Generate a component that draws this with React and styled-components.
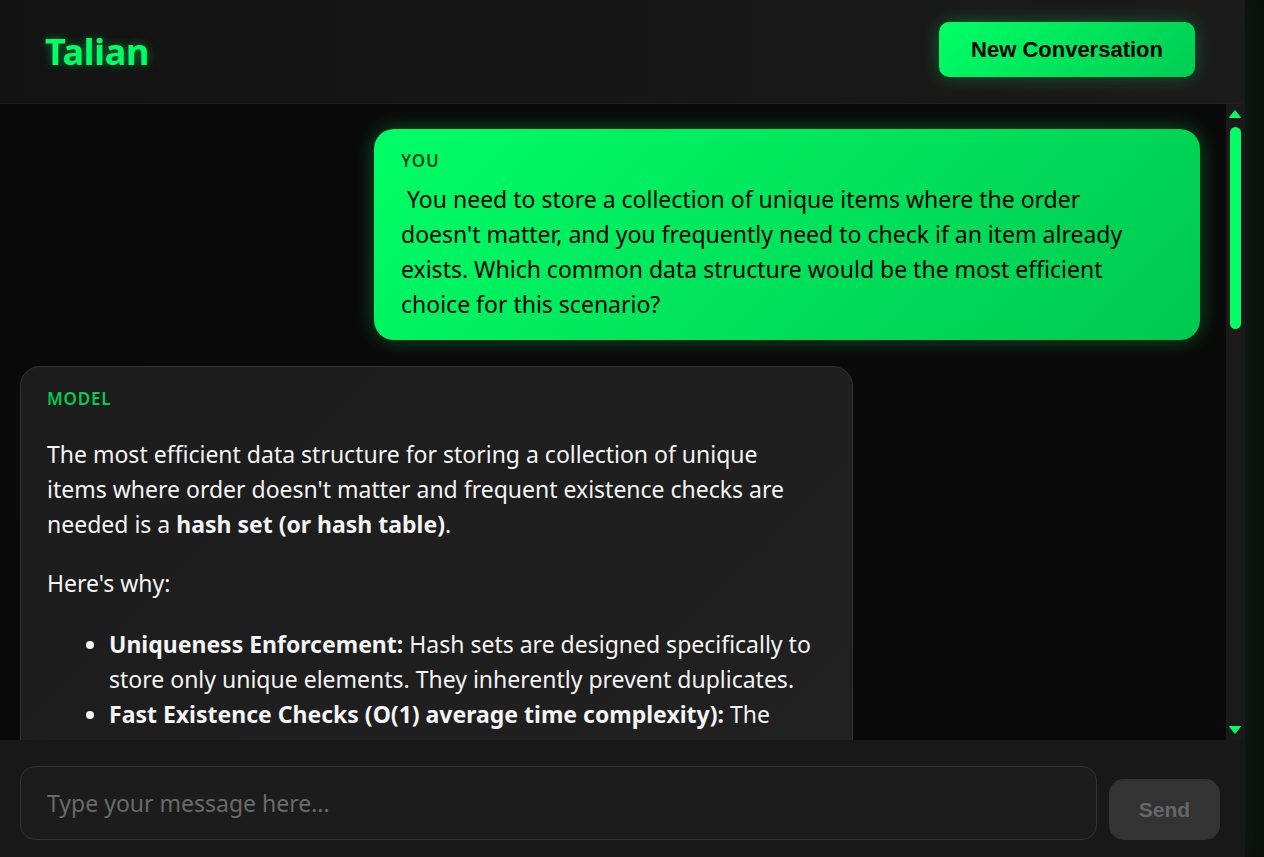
import React from "react";
import styled, { createGlobalStyle } from "styled-components";

const GREEN = "#00ff66";

const Global = createGlobalStyle`
  * { box-sizing: border-box; }
  html, body { margin: 0; padding: 0; height: 100%; overflow: hidden; }
  body {
    background: #0c0f0d;
    font-family: "Noto Sans", "Open Sans", sans-serif;
    color: #f0f0f0;
  }
  #root { height: 100%; }
`;

const Page = styled.div`
  height: 100vh;
  display: flex;
`;

const Shell = styled.div`
  width: 1245px;
  height: 100%;
  display: flex;
  flex-direction: column;
  background: #0a0a0a;
  box-shadow: 0 0 30px rgba(0, 255, 102, 0.08);
`;

const Header = styled.header`
  height: 104px;
  flex-shrink: 0;
  display: flex;
  align-items: center;
  justify-content: space-between;
  padding: 0 50px 0 45px;
  background: linear-gradient(90deg, #121212, #1b1b1b);
  border-bottom: 1px solid #1e1e1e;
`;

const Title = styled.h1`
  margin: 0;
  font-size: 36px;
  font-weight: 700;
  color: ${GREEN};
  text-shadow: 0 0 10px rgba(0, 255, 102, 0.45);
  letter-spacing: -0.3px;
`;

const NewButton = styled.button`
  font-family: "Liberation Sans", Arial, sans-serif;
  font-size: 22px;
  font-weight: 700;
  color: #000;
  border: none;
  border-radius: 10px;
  width: 256px;
  height: 55px;
  margin-top: -4px;
  background: linear-gradient(135deg, #00ff66, #00cc52);
  box-shadow: 0 0 18px rgba(0, 255, 102, 0.3);
  cursor: pointer;
`;

const ChatArea = styled.div`
  flex: 1;
  min-height: 0;
  display: flex;
`;

const Messages = styled.main`
  flex: 1;
  min-width: 0;
  overflow-y: auto;
  scrollbar-width: none;
  padding: 25px 26px 25px 20px;
  display: flex;
  flex-direction: column;
  gap: 26px;
`;

const Rail = styled.div`
  width: 19px;
  flex-shrink: 0;
  background: #1a1a1a;
  display: flex;
  flex-direction: column;
  align-items: center;
`;

const RailButton = styled.div`
  height: 18px;
  width: 100%;
  display: flex;
  justify-content: center;
  align-items: ${(p) => (p.$down ? "flex-start" : "flex-end")};
  padding: ${(p) => (p.$down ? "4px 0 0" : "0 0 4px")};
  margin-top: ${(p) => (p.$down ? "auto" : "0")};
  svg { display: block; margin-left: -1px; }
`;

const Thumb = styled.div`
  width: 11px;
  height: 202px;
  margin-top: 5px;
  margin-left: -1px;
  border-radius: 6px;
  background: ${GREEN};
`;

const Bubble = styled.div`
  flex-shrink: 0;
  align-self: ${(p) => (p.$user ? "flex-end" : "flex-start")};
  width: ${(p) => (p.$user ? "826px" : "833px")};
  border-radius: 20px;
  padding: ${(p) => (p.$user ? "20px 40px 18px 27px" : "20px 35px 20px 26px")};
  font-size: 23px;
  line-height: 35px;
  ${(p) =>
    p.$user
      ? `
    background: linear-gradient(135deg, #00ff66, #00c850);
    color: #000;
    box-shadow: 0 0 20px rgba(0, 255, 102, 0.3);
  `
      : `
    background: linear-gradient(135deg, #1c1c1c, #232323);
    color: #f4f4f4;
    border: 1px solid #333;
  `}
`;

const Role = styled.div`
  font-size: 17px;
  line-height: 24px;
  font-weight: 600;
  letter-spacing: 0.8px;
  text-transform: uppercase;
  margin-bottom: ${(p) => (p.$user ? "9px" : "26px")};
  color: ${(p) => (p.$user ? "rgba(0, 0, 0, 0.72)" : "#00cc52")};
`;

const UserText = styled.div`
  white-space: pre-wrap;
`;

const P = styled.p`
  margin: 0 0 24px;
  &:last-child { margin-bottom: 0; }
`;

const List = styled.ul`
  margin: 26px 0;
  padding-left: 62px;
  li { margin: 0; }
`;

const Footer = styled.footer`
  flex-shrink: 0;
  height: 117px;
  display: flex;
  align-items: flex-end;
  gap: 12px;
  padding: 26px 25px 17px 20px;
  background: #181818;
`;

const Input = styled.input`
  flex: 1;
  height: 74px;
  border-radius: 15px;
  border: 1px solid #333;
  background: #1c1c1c;
  padding: 0 26px;
  font-family: "Noto Sans", sans-serif;
  font-size: 23px;
  color: #f0f0f0;
  outline: none;
  &::placeholder { color: #6a6a6a; }
`;

const SendButton = styled.button`
  width: 111px;
  height: 61px;
  border: none;
  border-radius: 15px;
  background: #333;
  color: #666;
  font-family: "Liberation Sans", Arial, sans-serif;
  font-size: 21px;
  font-weight: 700;
`;

const Arrow = ({ down }) => (
  <svg width="12" height="8" viewBox="0 0 12 8">
    <path
      d={down ? "M0.5 0.5 H11.5 L6 7.5 Z" : "M0.5 7.5 H11.5 L6 0.5 Z"}
      fill={GREEN}
      stroke={GREEN}
      strokeWidth="1"
      strokeLinejoin="round"
    />
  </svg>
);

export default function App() {
  return (
    <Page>
      <Global />
      <Shell>
        <Header>
          <Title>Talian</Title>
          <NewButton>New Conversation</NewButton>
        </Header>
        <ChatArea>
          <Messages>
            <Bubble $user>
              <Role $user>You</Role>
              <UserText>
                {" You need to store a collection of unique items where the order doesn't matter, and you frequently need to check if an item already exists. Which common data structure would be the most efficient choice for this scenario?"}
              </UserText>
            </Bubble>
            <Bubble>
              <Role>Model</Role>
              <P>
                The most efficient data structure for storing a collection of unique items where order doesn't matter and frequent existence checks are needed is a <b>hash set (or hash table)</b>.
              </P>
              <P>Here's why:</P>
              <List>
                <li>
                  <b>Uniqueness Enforcement:</b> Hash sets are designed specifically to store only unique elements. They inherently prevent duplicates.
                </li>
                <li>
                  <b>Fast Existence Checks (O(1) average time complexity):</b> The core of a hash set is a hash table, which uses a hash function to compute an index for each element. Checking whether an item exists only requires computing its hash and looking in one bucket.
                </li>
                <li>
                  <b>Unordered Storage:</b> Since order doesn't matter, the hash set can place elements wherever its hash function dictates, which is exactly what allows such fast lookups.
                </li>
                <li>
                  <b>Efficient Insertion and Deletion:</b> Adding or removing an element is also O(1) on average, for the same reason.
                </li>
              </List>
              <P>
                Other structures are less suitable: an array or a linked list would need O(n) time to check for an item, and a balanced binary search tree offers O(log n) lookups but keeps its elements sorted, which you don't need.
              </P>
              <P>
                In short, a hash set gives you uniqueness and constant-time membership tests, making it the most efficient choice for this scenario.
              </P>
            </Bubble>
          </Messages>
          <Rail>
            <RailButton>
              <Arrow />
            </RailButton>
            <Thumb />
            <RailButton $down>
              <Arrow down />
            </RailButton>
          </Rail>
        </ChatArea>
        <Footer>
          <Input placeholder="Type your message here..." />
          <SendButton>Send</SendButton>
        </Footer>
      </Shell>
    </Page>
  );
}
